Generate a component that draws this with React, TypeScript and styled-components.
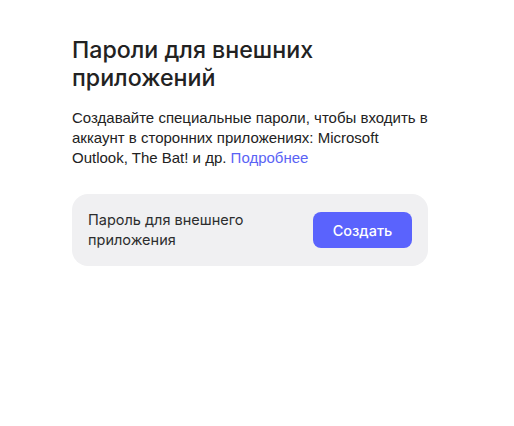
import React from 'react'
import styled, { createGlobalStyle } from 'styled-components'

const GlobalStyle = createGlobalStyle`
  body {
    margin: 0;
    background: #ffffff;
    font-family: 'Liberation Sans', Arial, sans-serif;
  }
`

const Page = styled.div`
  padding: 36px 0 0 72px;
`

const Section = styled.div`
  width: 356px;
  display: flex;
  flex-flow: column nowrap;
`

const Title = styled.h1`
  margin: 0;
  font-family: Inter, 'Noto Sans', sans-serif;
  font-size: 23.2px;
  line-height: 28px;
  font-weight: 500;
  color: #222222;
`

const Description = styled.p`
  margin: 16px 0 0;
  font-size: 15px;
  line-height: 20px;
  color: #222222;
`

const Link = styled.a`
  color: #5a63f5;
  text-decoration: none;
`

const Card = styled.div`
  margin-top: 26px;
  height: 72px;
  box-sizing: border-box;
  padding: 0 16px;
  border-radius: 16px;
  background: #f0f0f2;
  display: flex;
  flex-flow: row nowrap;
  justify-content: space-between;
  align-items: center;
`

const CardText = styled.div`
  font-family: Inter, 'Noto Sans', sans-serif;
  font-size: 14.5px;
  line-height: 20px;
  color: #2c2d2e;
  width: 180px;
`

const Button = styled.button`
  height: 36px;
  width: 99px;
  border: none;
  border-radius: 8px;
  background: #5a63fd;
  color: #ffffff;
  font-family: Inter, 'Noto Sans', sans-serif;
  font-size: 14.5px;
  font-weight: 500;
  cursor: pointer;
`

const App: React.FunctionComponent = () => {
  return (
    <Page>
      <GlobalStyle />
      <Section>
        <Title>Пароли для внешних приложений</Title>
        <Description>
          Создавайте специальные пароли, чтобы входить в аккаунт в сторонних приложениях: Microsoft
          Outlook, The Bat! и др. <Link href="#">Подробнее</Link>
        </Description>
        <Card>
          <CardText>Пароль для внешнего приложения</CardText>
          <Button>Создать</Button>
        </Card>
      </Section>
    </Page>
  )
}

export default App
